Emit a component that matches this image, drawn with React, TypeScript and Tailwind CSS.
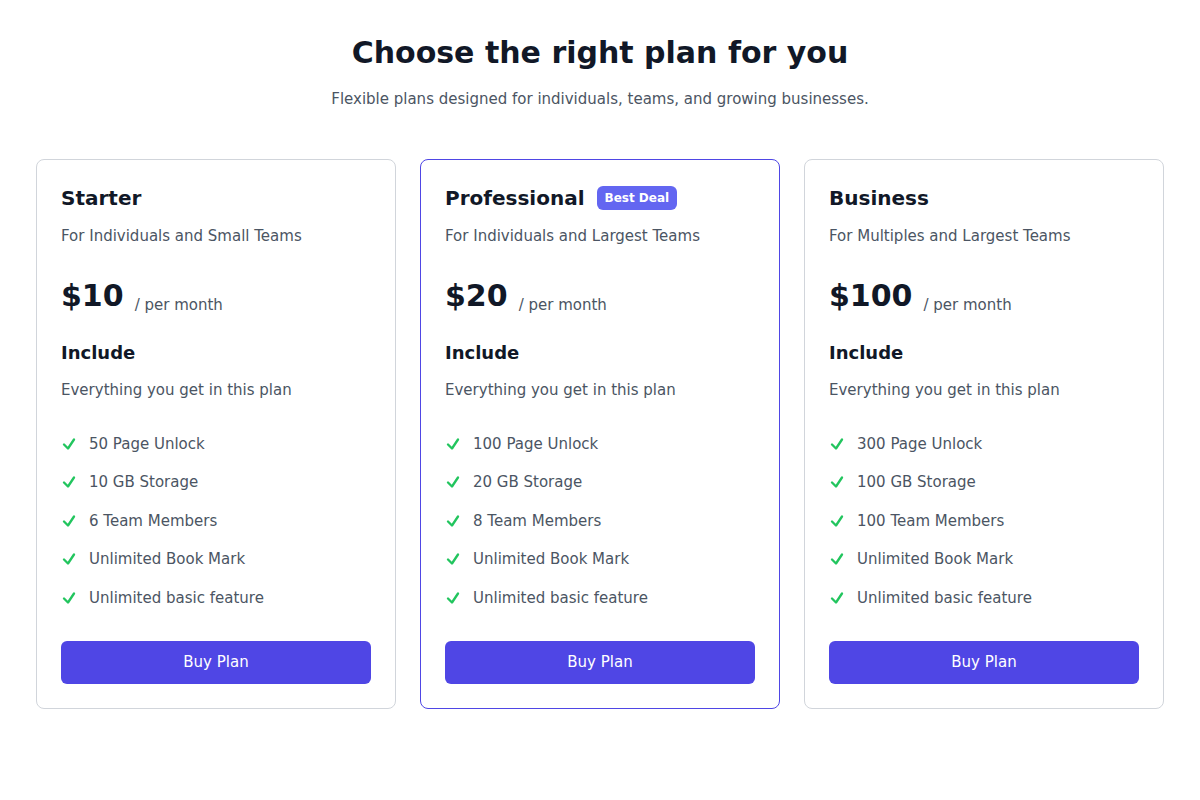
const plans = [
  {
    name: "Starter",
    tagline: "For Individuals and Small Teams",
    price: "$10",
    features: [
      "50 Page Unlock",
      "10 GB Storage",
      "6 Team Members",
      "Unlimited Book Mark",
      "Unlimited basic feature",
    ],
    featured: false,
  },
  {
    name: "Professional",
    tagline: "For Individuals and Largest Teams",
    price: "$20",
    features: [
      "100 Page Unlock",
      "20 GB Storage",
      "8 Team Members",
      "Unlimited Book Mark",
      "Unlimited basic feature",
    ],
    featured: true,
  },
  {
    name: "Business",
    tagline: "For Multiples and Largest Teams",
    price: "$100",
    features: [
      "300 Page Unlock",
      "100 GB Storage",
      "100 Team Members",
      "Unlimited Book Mark",
      "Unlimited basic feature",
    ],
    featured: false,
  },
];

function CheckIcon() {
  return (
    <svg
      viewBox="0 0 24 24"
      className="h-4 w-4 shrink-0 text-[#22c55e]"
      fill="none"
      stroke="currentColor"
      strokeWidth={3.5}
      strokeLinecap="round"
      strokeLinejoin="round"
    >
      <path d="M4.5 12.75l6 6 9-13.5" />
    </svg>
  );
}

type Plan = (typeof plans)[number];

function PlanCard({ plan }: { plan: Plan }) {
  return (
    <div
      className={`flex flex-col rounded-lg border bg-white p-6 ${
        plan.featured ? "border-[#4f46e5]" : "border-[#d1d5db]"
      }`}
    >
      <div className="flex items-center gap-3">
        <h3 className="text-xl leading-7 font-bold text-[#111827]">
          {plan.name}
        </h3>
        {plan.featured && (
          <span className="rounded-md bg-[#6366f1] px-2 py-1 text-xs leading-4 font-bold text-white">
            Best Deal
          </span>
        )}
      </div>
      <p className="mt-[13px] text-[15px] text-[#4b5563]">{plan.tagline}</p>

      <div className="mt-[31px] flex items-end">
        <span className="text-3xl leading-9 font-bold text-[#111827]">
          {plan.price}
        </span>
        <span className="mb-[-2px] ml-[11px] text-[15px] text-[#4b5563]">
          / per month
        </span>
      </div>

      <h4 className="mt-[25px] text-lg leading-7 font-bold text-[#111827]">
        Include
      </h4>
      <p className="mt-3 text-[15px] text-[#4b5563]">
        Everything you get in this plan
      </p>

      <ul className="mt-[31px] flex flex-col gap-4">
        {plan.features.map((f) => (
          <li
            key={f}
            className="flex items-center gap-3 text-[15px] text-[#4b5563]"
          >
            <CheckIcon />
            {f}
          </li>
        ))}
      </ul>

      <button className="mt-8 h-[43px] rounded-md bg-[#4f46e5] text-[15px] text-white">
        Buy Plan
      </button>
    </div>
  );
}

export default function App() {
  return (
    <div className="min-h-[800px] bg-white px-9 pt-[35px] font-['DejaVu_Sans',sans-serif]">
      <div className="text-center">
        <h1 className="text-3xl leading-9 font-bold text-[#111827]">
          Choose the right plan for you
        </h1>
        <p className="mt-[17px] text-[15px] text-[#4b5563]">
          Flexible plans designed for individuals, teams, and growing
          businesses.
        </p>
      </div>

      <div className="mt-[48px] grid grid-cols-3 gap-6">
        {plans.map((p) => (
          <PlanCard key={p.name} plan={p} />
        ))}
      </div>
    </div>
  );
}
